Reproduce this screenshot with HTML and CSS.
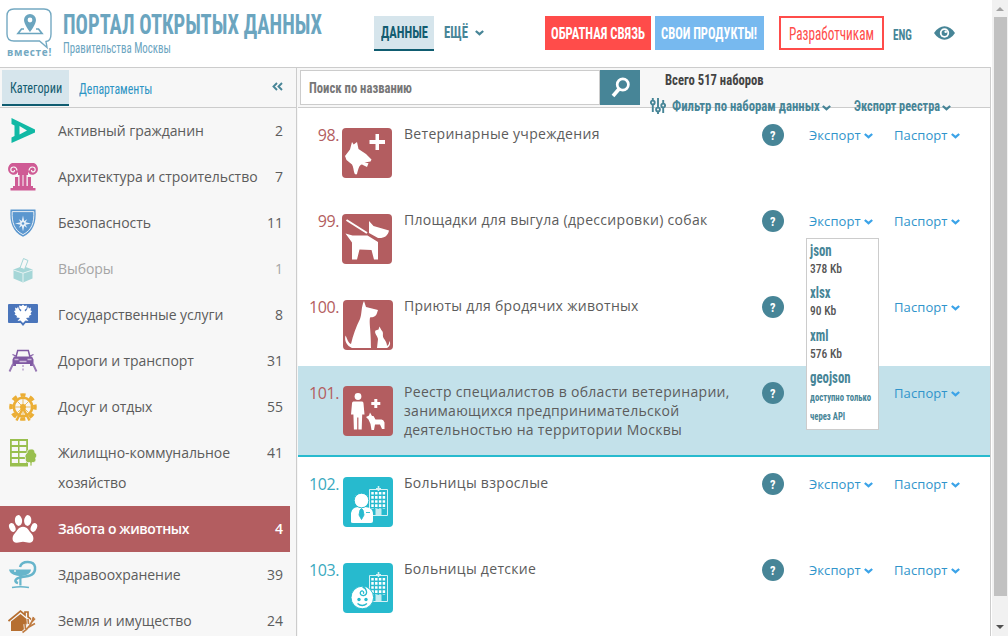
FILE: index.html
```
<!DOCTYPE html>
<html lang="ru">
<head>
<meta charset="utf-8">
<title>Портал открытых данных</title>
<link rel="stylesheet" href="styles.css">
</head>
<body>
<svg class="defs" width="0" height="0" aria-hidden="true">
  <symbol id="chev" viewBox="0 0 9 6"><path d="M.800 1 4.500 4.200 8.200 1" fill="none" stroke="currentColor" stroke-width="2.200"/></symbol>
  <symbol id="clinic" viewBox="0 0 20 30"><path d="M1 3.500h18v26H1z" fill="#27bace" stroke="#d5f1f5"/><path d="M9.200 0h1.600v5H9.200zM7.500 2h5v1.300h-5z" fill="#d5f1f5"/><path d="M4 6v17M7.800 6v17M11.600 6v17M15.400 6v17" stroke="#fff" stroke-width="2.500" stroke-dasharray="2.600 1.500"/><path d="M7 23h6v6H7z" fill="#c4ebf0"/></symbol>
</svg>
<div class="frame">
<div class="page">
  <header class="header">
    <div class="logo">
      <svg width="47" height="42" viewBox="0 0 47 42"><path d="M8 1h30q7 0 7 7v18q0 7-5 7.500l1 6-7.500-6.500H8q-7 0-7-7V8q0-7 7-7z" fill="none" stroke="#74a9c2" stroke-width="1.400"/><path d="M24 6a6 6 0 0 0-6 6c0 4.500 6 12 6 12s6-7.500 6-12a6 6 0 0 0-6-6zm0 3.600a2.400 2.400 0 1 1 0 4.800 2.400 2.400 0 0 1 0-4.800z" fill="#6ba5bf" fill-rule="evenodd"/><path d="M18 21h-2.500L12 25.500h24L32.500 21H30" fill="none" stroke="#6ba5bf" stroke-width="1.700"/></svg>
      <div class="logo-word">вместе!</div>
    </div>
    <div class="brand">
      <div class="brand-title din">ПОРТАЛ ОТКРЫТЫХ ДАННЫХ</div>
      <div class="brand-sub din">Правительства Москвы</div>
    </div>
    <nav class="nav">
      <div class="nav-data"><span class="din">ДАННЫЕ</span></div>
      <div class="nav-more"><span class="din">ЕЩЁ</span><svg class="more-chev" width="9" height="6"><use href="#chev"/></svg></div>
      <div class="btn btn-red"><span class="din">ОБРАТНАЯ СВЯЗЬ</span></div>
      <div class="btn btn-blue"><span class="din">СВОИ ПРОДУКТЫ!</span></div>
      <div class="btn btn-line"><span class="din">Разработчикам</span></div>
      <div class="lang"><span class="din">ENG</span></div>
      <svg class="eye" width="21" height="14" viewBox="0 0 21 14"><path d="M0 7C6-2 15-2 21 7 15 16 6 16 0 7z" fill="#478597"/><circle cx="10.500" cy="7" r="4.700" fill="#fff"/><circle cx="10.500" cy="7" r="2.900" fill="#478597"/><circle cx="11.700" cy="5.800" r="1.300" fill="#fff"/></svg>
    </nav>
  </header>
  <div class="body">
    <aside class="sidebar">
      <div class="tabs">
        <div class="tab tab-on"><span class="din">Категории</span></div>
        <div class="tab"><span class="din">Департаменты</span></div>
        <svg class="collapse" width="11" height="9" viewBox="0 0 11 9"><path d="M5 1 1.500 4.500 5 8M10 1 6.500 4.500 10 8" fill="none" stroke="#478597" stroke-width="1.900"/></svg>
      </div>
      <ul class="cats">
        <li><svg viewBox="0 0 30 30"><path d="M3.500 2 27 13.500v3L3.500 27v-5.600l3-1.400v-10.500l-3-1.500zm8 8v8.500l7.500-4z" fill="#11b9a5" fill-rule="evenodd"/></svg><span>Активный гражданин</span><b>2</b></li>
        <li><svg viewBox="0 0 30 30"><path d="M4 1h22c5 2 5.500 10 0 11.500-4 1-6.500-1.500-6-4.500H10c.5 3-2 5.500-6 4.500C-1.500 11-1 3 4 1z" fill="#cf5b95"/><path d="M9 8.500C8.500 4 3 4 2.800 7.500c0 3 4 3.200 3.700.5M21 8.500c.5-4.500 6-4.500 6.200-1 0 3-4 3.200-3.700.5" fill="none" stroke="#f7f7f7" stroke-width="1.200"/><path d="M10 5h10v8H10z" fill="#cf5b95"/><path d="M7 15h3.200v10H7zM19.800 15H23v10h-3.200zM11.500 12h3v13h-3zM15.500 12h3v13h-3zM5 24h20v2H5zM2.500 26h25v2.500h-25z" fill="#cf5b95"/></svg><span>Архитектура и строительство</span><b>7</b></li>
        <li><svg viewBox="0 0 30 30"><path d="M2.500 1.500h25c1 13-2 22-12.500 27.300C4.500 23.500 1.500 14.500 2.500 1.500z" fill="#5b97cf"/><path d="M4.200 3.600h21.600c.5 11-2 18.500-10.800 23C6.200 22.100 3.700 14.600 4.200 3.600z" fill="none" stroke="#f7f7f7" stroke-width=".9"/><path d="m15 7.500 1.200 5.500 3-1.700-1.700 3 5.500 1.200-5.500 1.200 1.700 3-3-1.700-1.200 5.400-1.200-5.400-3 1.700 1.700-3L7 15.500l5.500-1.200-1.700-3 3 1.700z" fill="#e8f0f8"/><circle cx="15" cy="15.500" r="1.300" fill="#5b97cf"/></svg><span>Безопасность</span><b>11</b></li>
        <li class="dim"><svg viewBox="0 0 30 30"><path d="m5.500 15.500 9.500-3.500 9.500 3.500v9L15 28.500l-9.500-4z" fill="#a5d6d7"/><path d="m5.500 16 9.500 3.200 9.500-3.200M15 19.200V28" fill="none" stroke="#e6f3f3" stroke-width="1"/><path d="m12 14 3.500-9.500 4.500 2-3.500 9z" fill="#f7f7f7" stroke="#a5d6d7"/></svg><span>Выборы</span><b>1</b></li>
        <li><svg viewBox="0 0 30 30"><path d="M1 4h28q1 0 1 1v17q0 1-1 1H17.500L15 26l-2.500-3H1q-1 0-1-1V5q0-1 1-1z" fill="#4a75bb"/><path d="m15 4.500 1.500 1.500 2.500-.5-.5 3-2 1.500 1 1.500 1.500-2 1-3 1 2 2-1-.5 3 1.500.5-1.500 2.500 1 1-2.500 1.500.5 1.500-3.500.5 2.500 3-3-.5L15 23l-2.500-2.500-3 .5 2.500-3-3.500-.5.5-1.500L6.500 14.500l1-1L6 11l1.500-.5-.5-3 2 1 1-2 1 3 1.500 2 1-1.500-2-1.500-.5-3 2.500.5z" fill="#fff"/></svg><span>Государственные услуги</span><b>8</b></li>
        <li><svg viewBox="0 0 30 30"><path d="m8 11 1.700-6.500h10.600L22 11" fill="none" stroke="#805aa3" stroke-width="1.500"/><path d="M4.500 8.500 8 10M25.500 8.500 22 10" stroke="#805aa3" stroke-width="1.200"/><path d="M6 10.500h18l1.500 3V20H22v-2H8v2H4.500v-6.500z" fill="#805aa3"/><path d="M6.500 13.500h4M19.500 13.500h4M11.500 15.500h7" stroke="#cdbddb" stroke-width="1.300"/><path d="M5 18 1.500 25.500M25 18l3.500 7.500" stroke="#9979b5" stroke-width="1.900"/><path d="M15 19v7" stroke="#9979b5" stroke-dasharray="2 1.500"/></svg><span>Дороги и транспорт</span><b>31</b></li>
        <li><svg viewBox="0 0 30 30"><circle cx="15" cy="15" r="12" fill="none" stroke="#ebae35" stroke-width="3.600" stroke-dasharray="5 4.425" transform="rotate(-102 15 15)"/><circle cx="15" cy="15" r="9.200" fill="none" stroke="#ebae35" stroke-width="2.600"/><path d="M15 7v16M7 15h16M9.500 9.500l11 11M20.500 9.500l-11 11" stroke="#ebae35" stroke-width=".8"/><circle cx="15" cy="15" r="3" fill="#ebae35"/><path d="M15 16 8.500 28.500M15 16l6.500 12.500" stroke="#ebae35" stroke-width="2.500"/></svg><span>Досуг и отдых</span><b>55</b></li>
        <li class="two"><svg viewBox="0 0 30 30"><path d="M2 1h18v27.500H2zM3.800 3v4h6.200V3zm7.700 0v4h6.700V3zM3.800 9v4h6.200V9zm7.700 0v4h6.700V9zM3.800 15v4h6.200v-4zm7.700 0v4h6.700v-4zM3.800 21v4h6.200v-4zm7.700 0v4h6.700v-4z" fill="#99bf4e" fill-rule="evenodd"/><path d="M23 11c3-.5 4 2 3.800 3.500 2.700 1.500 2 4.500.7 5.500 1.500 3-1 5-3.500 4.500V28h-2v-3.500c-3 1-5.500-1.500-4.500-4.500-1-1.500-.5-4 1.500-5 0-2 1-4 4-4z" fill="#99bf4e" stroke="#f7f7f7" stroke-width=".8"/></svg><span>Жилищно-коммунальное хозяйство</span><b>41</b></li>
        <li class="on"><svg viewBox="0 0 30 30"><g fill="#fff"><ellipse cx="10.500" cy="6.500" rx="3.600" ry="5.400" transform="rotate(-6 10.500 6.500)"/><ellipse cx="19.700" cy="6.500" rx="3.600" ry="5.400" transform="rotate(6 19.700 6.500)"/><ellipse cx="4.300" cy="13.500" rx="3" ry="4.600" transform="rotate(-22 4.300 13.500)"/><ellipse cx="25.900" cy="13.500" rx="3" ry="4.600" transform="rotate(22 25.900 13.500)"/><path d="M15 12.800c4.500 0 5.500 3.700 8.300 6.700 3.200 3.400 3 9.200-2 9.200-2.500 0-4-1-6.300-1s-3.800 1-6.300 1c-5 0-5.200-5.800-2-9.200 2.800-3 3.800-6.700 8.300-6.700z"/></g></svg><span>Забота о животных</span><b>4</b></li>
        <li><svg viewBox="0 0 30 30"><path d="M1 9.500h22c-.5 4-4 6-9.500 6.500v9.500h-2.200V16C5.500 15.500 2 13.500 1 9.500z" fill="#67b5cb"/><path d="M12 7C14 0 26 .5 27 7c.8 8-5 9-13 10-8 1.500-8 5-4 6" fill="none" stroke="#67b5cb" stroke-width="2.500"/><path d="M4 27.500c5-1 12-1 17 0" fill="none" stroke="#67b5cb" stroke-width="1.500"/><circle cx="7" cy="11" r=".9" fill="#f7f7f7"/></svg><span>Здравоохранение</span><b>39</b></li>
        <li><svg viewBox="0 0 30 30"><path d="M.5 15 12.500 5l4.500 3.800V6h3v4.800L24 14" fill="none" stroke="#b66f31" stroke-width="1.700"/><path d="m3 15.500 9.500-7.500 8.500 7-6 10H3z" fill="#b66f31"/><path d="M14.500 26.500C20 23 24 17 25.500 11M22.500 17.500l4.500-5M20 21.500l7-4M20.500 18l-.5-5M17.500 23l-.5-5" stroke="#f7f7f7" stroke-width="3.200" fill="none"/><path d="M14.500 26.500C20 23 24 17 25.500 11M22.500 17.500l4.500-5M20 21.500l7-4M20.500 18l-.5-5M17.500 23l-.5-5" stroke="#c07c42" stroke-width="1.700" fill="none"/></svg><span>Земля и имущество</span><b>24</b></li>
      </ul>
    </aside>
    <main class="main">
      <div class="toolbar">
        <div class="search"><span class="din">Поиск по названию</span></div>
        <div class="search-btn"><svg width="20" height="21" viewBox="0 0 20 21"><circle cx="11.800" cy="7.500" r="5.600" fill="none" stroke="#fff" stroke-width="2.700"/><path d="m8 12-6 7" stroke="#fff" stroke-width="3.600"/></svg></div>
        <div class="tools">
          <div class="total"><span class="din">Всего 517 наборов</span></div>
          <div class="tool-row">
            <svg class="sliders" width="16" height="16" viewBox="0 0 16 16" fill="none" stroke="#478597" stroke-width="1.900"><circle cx="2.800" cy="4.500" r="1.900"/><path d="M2.800 0v2.500M2.800 6.500V14"/><circle cx="8" cy="11.500" r="1.900"/><path d="M8 0v9.500M8 13.500V16"/><circle cx="13.200" cy="7.500" r="1.900"/><path d="M13.200 2v3.500M13.200 9.500V15"/></svg>
            <span class="filter"><span class="din">Фильтр по наборам данных</span></span>
            <svg class="tc" width="9" height="6"><use href="#chev"/></svg>
            <span class="registry"><span class="din">Экспорт реестра</span></span>
            <svg class="tc" width="9" height="6"><use href="#chev"/></svg>
          </div>
        </div>
      </div>
      <div class="row">
        <div class="num">98.</div>
        <svg class="pic pic-2" viewBox="0 0 50 50"><path d="M33.500 6h3.500v6h6v4h-6v6h-3.500v-6h-6v-4h6z" fill="#fff"/><path d="m10 14 1.700 2.500L15 14l1.500 7 7.500 5 5.500 5.500-1 2-6 1 4 .8-1.500 3.700-5-2.500c-3 .5-3.500 4-5 9.500q-1 1-2.500-.5c-1-3-1-6.500-2.500-9L4.500 32 3 28l5-6.500z" fill="#fff"/></svg>
        <div class="name">Ветеринарные учреждения</div>
        <div class="help"><span class="din">?</span></div>
        <div class="link exp">Экспорт<svg width="9" height="6"><use href="#chev"/></svg></div>
        <div class="link">Паспорт<svg width="9" height="6"><use href="#chev"/></svg></div>
      </div>
      <div class="row">
        <div class="num">99.</div>
        <svg class="pic pic-2" viewBox="0 0 50 50"><path d="m4.500 6 20.500 13" stroke="#fff" stroke-width="2"/><path d="m27 7 4.500 5 15.500 4.500c-1 5.500-5 8-11 7.500L27 19z" fill="#fff"/><path d="m3.500 19.500 7 2h15L36 28v17.500h-4L29.500 36l-12-.5L15 45.500h-5V28.500z" fill="#fff"/></svg>
        <div class="name">Площадки для выгула (дрессировки) собак</div>
        <div class="help"><span class="din">?</span></div>
        <div class="link exp">Экспорт<svg width="9" height="6"><use href="#chev"/></svg>
          <div class="menu">
            <div class="fmt"><span class="din">json</span></div><div class="size"><span class="din">378 Kb</span></div>
            <div class="fmt"><span class="din">xlsx</span></div><div class="size"><span class="din">90 Kb</span></div>
            <div class="fmt"><span class="din">xml</span></div><div class="size"><span class="din">576 Kb</span></div>
            <div class="fmt"><span class="din">geojson</span></div>
            <div class="note"><span class="din">доступно только<br>через API</span></div>
          </div>
        </div>
        <div class="link">Паспорт<svg width="9" height="6"><use href="#chev"/></svg></div>
      </div>
      <div class="row">
        <div class="num">100.</div>
        <svg class="pic" viewBox="0 0 50 50"><path d="m21 1 2 6 12 3-1 3c-1 4-4 4-7 4.500-1 6 1 12 1 30.500H9C4 46 1 41 2.500 35.500 4.500 39 5 43 8 44c2-9 5-17 9-25 2-5 1-12 4-18z" fill="#fff"/><path d="m36.500 26.500 1.800 3.500c3 3 .7 4.500 2.200 8 2 3 3.500 5 3.500 8 2-1 2-3 2.500-5 1.500 3 0 5.500-2.500 7H34l1-9c-1-4-4-6-2.500-8.500 1-.5 2-.5 3-1z" fill="#fff"/></svg>
        <div class="name">Приюты для бродячих животных</div>
        <div class="help"><span class="din">?</span></div>
        <div class="link exp"></div>
        <div class="link">Паспорт<svg width="9" height="6"><use href="#chev"/></svg></div>
      </div>
      <div class="row hot">
        <div class="num">101.</div>
        <svg class="pic" viewBox="0 0 50 50"><g fill="#fff"><circle cx="15" cy="10.500" r="3.400"/><path d="M10.500 15.500h8.500q1.500 0 1.500 2l1 11h-2.300l-.5 15h-3.300V31.500h-1.200v12h-3.300l-.5-15H8l1-11q0-2 1.500-2zM31.300 13h3v3h3v3h-3v3h-3v-3h-3v-3h3zM23 31l3-1.500 1-3 2 3.500h1.500l2 3.500h6q2 0 3 3V43h-2.500l-2-4.500h-5l-1 5.500h-2.500l-1-6-2-4.500z"/></g></svg>
        <div class="name">Реестр специалистов в области ветеринарии, занимающихся предпринимательской деятельностью на территории Москвы</div>
        <div class="help"><span class="din">?</span></div>
        <div class="link exp"></div>
        <div class="link">Паспорт<svg width="9" height="6"><use href="#chev"/></svg></div>
      </div>
      <div class="row med">
        <div class="num">102.</div>
        <svg class="pic" viewBox="0 0 50 50"><use href="#clinic" x="25.500" y="9" width="20" height="30"/><path d="M8 45V36q1-6 8-6h5q9 0 9 7v7q0 2-2 2H10q-2 0-2-1z" fill="#fff"/><circle cx="18.500" cy="23.500" r="7.300" fill="#fff" stroke="#27bace"/><path d="m18.500 31.500 1.500 1.500 1 5-2.500 4.500-2.500-4.500 1-5zM23 35.500h4" fill="#27bace" stroke="#27bace" stroke-width=".9"/></svg>
        <div class="name">Больницы взрослые</div>
        <div class="help"><span class="din">?</span></div>
        <div class="link exp">Экспорт<svg width="9" height="6"><use href="#chev"/></svg></div>
        <div class="link">Паспорт<svg width="9" height="6"><use href="#chev"/></svg></div>
      </div>
      <div class="row med">
        <div class="num">103.</div>
        <svg class="pic" viewBox="0 0 50 50"><use href="#clinic" x="25.500" y="9" width="20" height="30"/><circle cx="19.300" cy="34.500" r="11.300" fill="#fff" stroke="#27bace"/><circle cx="16" cy="36.500" r="1.700" fill="#27bace"/><circle cx="23" cy="36.500" r="1.700" fill="#27bace"/><path d="M14.500 40.500q4.800 4 9.500 0M19.500 24c4 1 6 7 1.500 8.500-5 .5-4.500-5-1.500-4.500 1.500.5 1.500 2 .5 2.500" fill="none" stroke="#27bace" stroke-width="1.300"/></svg>
        <div class="name">Больницы детские</div>
        <div class="help"><span class="din">?</span></div>
        <div class="link exp">Экспорт<svg width="9" height="6"><use href="#chev"/></svg></div>
        <div class="link">Паспорт<svg width="9" height="6"><use href="#chev"/></svg></div>
      </div>
    </main>
  </div>
</div>
<div class="scroll"><i class="up"></i><i class="thumb"></i><i class="down"></i></div>
</div>
</body>
</html>
```
FILE: styles.css
```
* { box-sizing: border-box; }
body { margin: 0; overflow: hidden; background: #fff; color: #5c5c5c; font: 14px/19px "Open Sans", "Noto Sans", sans-serif; }
.defs { position: absolute; }
.frame { display: flex; width: 1008px; height: 636px; overflow: hidden; }
.page { width: 992px; display: flex; flex-direction: column; }
svg { flex: none; display: block; }

/* Narrow DIN-like face: condensed Roboto squeezed by --k */
.din { display: inline-block; font-family: Roboto, "Open Sans", sans-serif; font-stretch: condensed; font-weight: 700; white-space: nowrap; transform: scaleX(var(--k, .85)); transform-origin: left center; }

.header { display: flex; height: 67px; flex: none; }
.logo { width: 63px; padding: 8px 0 0 6px; }
.logo-word { font: 700 10px/12px "Open Sans", sans-serif; letter-spacing: .7px; color: #74a9c2; margin: -4px 0 0 1px; }
.brand { width: 311px; padding-top: 10px; }
.brand-title { --k: .76; font-size: 27px; line-height: 30px; color: #6ba5bf; display: block; }
.brand-sub { --k: .776; font-size: 14px; line-height: 16px; font-weight: 400; color: #6ba5bf; display: block; }
.nav { display: flex; height: 66px; padding-top: 16px; color: #478597; }
.nav-data { --k: .785; width: 60px; height: 35px; background: #d6e5ec; border-bottom: 2px solid #0f5c70; color: #125c70; padding-left: 7px; font-size: 16px; line-height: 33px; }
.nav-more { --k: .8; width: 111px; display: flex; padding-left: 10px; font-size: 16px; line-height: 34px; }
.more-chev { margin: 14px 0 0 1px; }
.btn { height: 34px; color: #fff; font-size: 16px; line-height: 35px; }
.btn-red { --k: .791; width: 106px; background: #ff4c4a; padding-left: 6px; margin-right: 4px; }
.btn-blue { --k: .782; width: 109px; background: #77b9ef; padding-left: 6px; margin-right: 15px; }
.btn-line { --k: .733; width: 105px; border: 2px solid #ff4c4a; color: #ff4c4a; padding-left: 8px; font-size: 18px; line-height: 31px; }
.btn-line .din { font-weight: 400; }
.lang { --k: .8; width: 50px; padding-left: 9px; font-size: 14px; line-height: 37px; }
.eye { margin-top: 10px; }

.body { display: flex; width: 991px; height: 569px; border-top: 1px solid #ccc; border-right: 1px solid #ccc; }
.sidebar { width: 298px; flex: none; background: #f7f7f7; border-right: 1px solid #f7f7f7; box-shadow: inset -1px 0 #ccc; }
.tabs { display: flex; height: 40px; padding: 2px 0 0 2px; border-bottom: 1px solid #ccc; margin-right: 1px; }
.tab { --k: .79; height: 36px; font-size: 15px; line-height: 37px; padding-left: 10px; width: 203px; color: #2d94c4; }
.tab .din { font-weight: 400; }
.tab-on { --k: .815; width: 67px; background: #d6e5ec; border-bottom: 2px solid #0f5c70; color: #125c70; padding-left: 8px; line-height: 34px; }
.collapse { margin: 12px 0 0 0; }
.cats { list-style: none; margin: 0; padding: 0; letter-spacing: -.06px; }
.cats li { width: 290px; display: flex; padding: 8px 7px 8px 8px; line-height: 30px; }
.cats svg { width: 30px; height: 30px; margin-right: 20px; }
.cats span { width: 205px; flex: none; }
.cats b { font-weight: 400; margin-left: auto; }
.cats .dim { color: #a5a5a5; }
.cats .on { background: #b35d60; color: #fff; }
.cats .on span { font-weight: 600; letter-spacing: -.4px; }
.cats .on b { font-weight: 600; }

.main { flex: 1; min-width: 0; background: #fff; }
.toolbar { display: flex; height: 40px; padding: 2px 0 0 2px; background: #f7f7f7; border-bottom: 1px solid #ccc; }
.search { --k: .905; width: 300px; height: 35px; background: #fff; border: 1px solid #ccc; padding-left: 8px; line-height: 34px; color: #777; }
.search-btn { width: 40px; height: 35px; background: #478597; padding: 7px 0 0 11px; }
.tools { width: 340px; padding-left: 10px; }
.total { --k: .904; line-height: 20px; padding-left: 15px; color: #444; }
.tool-row { display: flex; height: 22px; margin-top: 7px; color: #478597; line-height: 18px; }
.sliders { margin-top: 1px; }
.filter { --k: .91; width: 150px; margin-left: 6px; }
.registry { --k: .876; width: 88px; margin-left: 23px; }
.tc { margin-top: 8px; }

.row { display: flex; height: 86px; color: #b35d60; }
.num { width: 41px; padding-top: 17px; font-size: 16px; line-height: 20px; letter-spacing: -.4px; text-align: right; white-space: nowrap; display: flex; justify-content: flex-end; }
.pic { width: 50px; height: 50px; margin: 20px 11px 0 4px; border-radius: 4px; background: #b35d60; }
.pic-2 { margin: 20px 12px 0 3px; }
.name { width: 358px; padding-top: 16px; letter-spacing: .3px; color: #5c5c5c; }
.help { --k: .95; width: 22px; height: 22px; margin: 16px 25px 0 0; border-radius: 50%; background: #478597; color: #fff; font-size: 13px; line-height: 23px; text-align: center; }
.link { position: relative; display: flex; height: 20px; margin-top: 18px; font-size: 13px; letter-spacing: .1px; color: #3094cb; }
.link > svg { margin: 7px 0 0 3px; color: #3ba3e8; }
.exp { width: 85px; }
.hot { height: 91px; background: #c3e1ea; border-bottom: 2px solid #27bace; }
.med { color: #3aa9c0; }
.med .pic { background: #27bace; }

.menu { position: absolute; z-index: 2; left: -3px; top: 26px; width: 73px; height: 192px; padding: 2px 0 0 3px; background: #fff; border: 1px solid #ccc; letter-spacing: 0; }
.fmt { --k: .8; font-size: 16px; line-height: 18px; height: 18px; color: #478597; }
.size { --k: .887; font-size: 13px; line-height: 19px; height: 24.400px; color: #555; }
.size .din { font-weight: 500; }
.note { --k: .865; font-size: 10px; line-height: 19px; padding-top: 2px; color: #478597; }

.scroll { position: relative; width: 16px; background: #f1f1f1; display: flex; flex-direction: column; align-items: center; }
.up, .down { width: 0; height: 0; border: 4px solid transparent; border-top: 0; border-bottom: 4px solid #a3a3a3; margin-top: 7px; }
.thumb { width: 13px; height: 579px; margin-top: 6px; background: #c1c1c1; }
.down { border-top: 4px solid #505050; border-bottom: 0; margin-top: 29px; }
```
